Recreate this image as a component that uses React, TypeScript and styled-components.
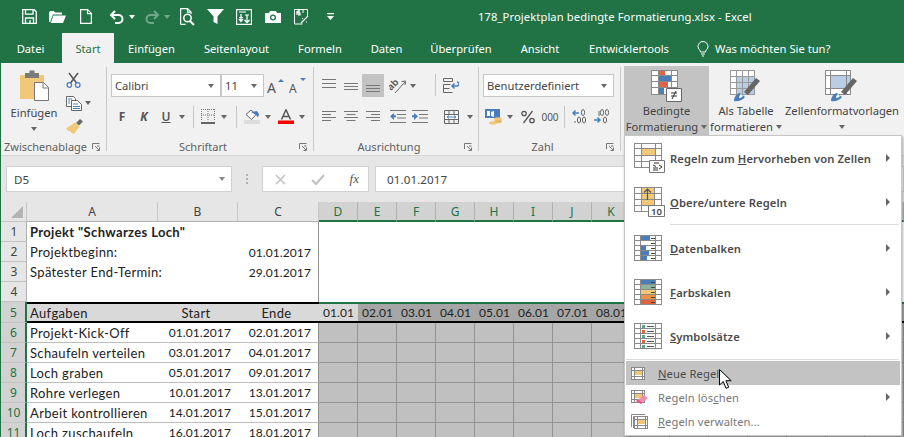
import React from "react";
import styled, { createGlobalStyle } from "styled-components";

const Global = createGlobalStyle`
  html, body { margin: 0; padding: 0; background: #e6e6e6; }
  * { box-sizing: border-box; }
  svg { display: block; flex: none; }
`;
const UI = `"Noto Sans", "Open Sans", sans-serif`;
const GREEN = "#217346";

const Page = styled.div`
  position: relative; width: 904px; height: 437px; overflow: hidden;
  display: flex; flex-direction: column; background: #e6e6e6;
  font-family: ${UI}; font-size: 11.2px; color: #444;
  border-left: 1px solid ${GREEN};
`;
const TitleBar = styled.div`
  height: 33px; flex: none; background: ${GREEN}; display: flex; align-items: center;
  padding-left: 15px; color: #fff; margin-left: -1px;
`;
const QatBtn = styled.div<{ $w: number; $ml?: number }>`
  width: ${p => p.$w}px; margin-left: ${p => p.$ml ?? 0}px; height: 24px; display: flex; align-items: center; justify-content: center;
`;
const DocTitle = styled.div`
  margin-left: 142px; font-size: 11.2px; white-space: nowrap; letter-spacing: .1px;
`;
const TabBar = styled.div`
  height: 30px; flex: none; background: ${GREEN}; display: flex; align-items: stretch; margin-left: -1px; padding-left: 4px;
`;
const Tab = styled.div<{ $w: number; $active?: boolean }>`
  width: ${p => p.$w}px; display: flex; align-items: center; justify-content: center; white-space: nowrap;
  color: ${p => (p.$active ? GREEN : "#fff")}; background: ${p => (p.$active ? "#f1f1f1" : "transparent")};
  font-size: 11.2px; padding-top: 1px;
  &:first-child { padding-right: 5px; }
`;
const TellMe = styled.div`
  display: flex; align-items: center; gap: 6px; margin-left: 14px; color: #fff; white-space: nowrap; padding-top: 1px;
`;
const Ribbon = styled.div`
  height: 93px; flex: none; background: #f1f1f1; border-bottom: 1px solid #d4d4d4; display: flex; padding-left: 1px;
`;
const Group = styled.div<{ $w: number }>`
  width: ${p => p.$w}px; flex: none; display: flex; flex-direction: column; height: 92px;
`;
const GroupBody = styled.div<{ $pl?: number; $pt?: number }>`
  height: 76px; display: flex; padding-left: ${p => p.$pl ?? 0}px; padding-top: ${p => p.$pt ?? 0}px;
`;
const GroupFoot = styled.div<{ $left?: boolean }>`
  height: 16px; display: flex; align-items: center; color: #606060; font-size: 11px; line-height: 16px;
  justify-content: space-between; padding: 0 6px 0 ${p => (p.$left ? 2 : 0)}px; white-space: nowrap;
  & > span:first-child { flex: 1; text-align: ${p => (p.$left ? "left" : "center")}; }
`;
const RibbonSep = styled.div`
  width: 1px; flex: none; margin: 4px 0 4px; background: #c9c9c9; height: 84px;
`;
const Stack = styled.div<{ $w?: number }>`
  display: flex; flex-direction: column; ${p => (p.$w ? `width: ${p.$w}px;` : "")}
`;
const Row = styled.div<{ $mt?: number }>`
  display: flex; align-items: center; height: 23px; margin-top: ${p => p.$mt ?? 0}px;
`;
const Tool = styled.div<{ $w?: number; $on?: boolean; $ml?: number }>`
  width: ${p => p.$w ?? 22}px; height: 23px; flex: none; display: flex; align-items: center; justify-content: center;
  margin-left: ${p => p.$ml ?? 0}px; background: ${p => (p.$on ? "#c3c3c3" : "transparent")}; color: #555; font-size: 10px;
`;
const Divider = styled.div<{ $l: number; $r: number }>`
  width: 1px; height: 22px; background: #c6c6c6; margin: 0 ${p => p.$r}px 0 ${p => p.$l}px;
`;
const Combo = styled.div<{ $w: number }>`
  width: ${p => p.$w}px; height: 23px; background: #fff; border: 1px solid #c6c6c6; display: flex; align-items: center;
  justify-content: space-between; padding: 0 6px 0 3px; font-size: 11.2px; color: #444; white-space: nowrap;
`;
const Caret = styled.i<{ $c?: string }>`
  display: block; width: 0; height: 0; flex: none; border-left: 3.5px solid transparent; border-right: 3.5px solid transparent;
  border-top: 4px solid ${p => p.$c ?? "#666"};
`;
const PasteCol = styled.div`
  width: 62px; display: flex; flex-direction: column; align-items: center; padding-top: 7px; color: #444; margin-right: 1px;
`;
const PasteLabel = styled.div`
  line-height: 16px; margin-top: 4px;
`;
const SmallCol = styled.div`
  display: flex; flex-direction: column; padding-top: 5px;
`;
const SmallTool = styled.div`
  height: 23.5px; display: flex; align-items: center; gap: 3px;
`;
const BigBtn = styled.div<{ $w: number; $on?: boolean }>`
  width: ${p => p.$w}px; height: 69px; flex: none; display: flex; flex-direction: column; align-items: center; padding-top: 4px;
  background: ${p => (p.$on ? "#c3c3c3" : "transparent")}; color: #444; line-height: 16px; white-space: nowrap; font-size: 11.2px;
`;
const BigIcon = styled.div`
  height: 33px; display: flex; align-items: flex-start; justify-content: center;
`;
const BigLine = styled.div`
  display: flex; align-items: center; gap: 3px; height: 16px;
`;
const FormulaBar = styled.div`
  height: 46px; flex: none; display: flex; align-items: flex-start; padding: 10px 0 0 5px; background: #e6e6e6;
`;
const NameBox = styled.div`
  width: 226px; height: 26px; background: #fff; border: 1px solid #d0d0d0; display: flex; align-items: center;
  justify-content: space-between; padding: 0 6px 0 7px; color: #444; font-size: 11.6px;
`;
const Dots = styled.div`
  width: 2px; height: 10px; margin: 8px 14px 0 14px; background: repeating-linear-gradient(#b0b0b0 0 2px, transparent 2px 4px);
`;
const FxBox = styled.div`
  width: 107px; height: 26px; background: #fff; border: 1px solid #d0d0d0; display: flex; align-items: center; justify-content: space-between; padding: 0 9px 0 12px;
`;
const FxText = styled.i`
  font-family: "Liberation Serif", serif; font-size: 13px; color: #555; font-style: italic; font-weight: 400;
`;
const Entry = styled.div`
  flex: 1; height: 26px; margin-left: 6px; background: #fff; border: 1px solid #d0d0d0; display: flex; align-items: center; padding-left: 11px; color: #444; letter-spacing: .1px; font-size: 11.6px;
`;
const Sheet = styled.div`
  flex: none; display: grid; background: #fff;
  grid-template-columns: 26px 131px 80px 81px repeat(15, 39px);
  grid-template-rows: 20px repeat(4, 20px) 21px repeat(6, 20px);
  font-family: Lato, "Liberation Sans", sans-serif; font-size: 13px; color: #222; letter-spacing: .35px;
`;
const Corner = styled.div`
  background: #e6e6e6; border-right: 1px solid #c6c6c6; border-bottom: 1px solid #c6c6c6; display: flex; align-items: flex-end; justify-content: flex-end; padding: 0 3px 3px 0;
`;
const ColHead = styled.div<{ $on?: boolean }>`
  display: flex; align-items: center; justify-content: center; font-family: ${UI}; font-size: 12px; letter-spacing: 0;
  background: ${p => (p.$on ? "#d2d2d2" : "#e6e6e6")}; color: ${p => (p.$on ? GREEN : "#444")};
  border-right: 1px solid ${p => (p.$on ? "#b0b0b0" : "#c6c6c6")};
  border-bottom: ${p => (p.$on ? `2px solid ${GREEN}` : "1px solid #b0b0b0")}; padding-top: ${p => (p.$on ? 1 : 0)}px;
`;
const RowHead = styled.div<{ $on?: boolean }>`
  display: flex; align-items: center; justify-content: center; font-family: ${UI}; font-size: 12px; padding-left: 1px; letter-spacing: 0;
  background: ${p => (p.$on ? "#d2d2d2" : "#e6e6e6")}; color: ${p => (p.$on ? GREEN : "#444")};
  border-bottom: 1px solid #c2c2c2; border-right: ${p => (p.$on ? `2px solid ${GREEN}` : "1px solid #b0b0b0")};
`;
const Cell = styled.div<{ $align?: string; $bold?: boolean; $kind?: string; $last?: boolean }>`
  display: flex; align-items: center; white-space: nowrap; padding: 0 7px 0 3px;
  justify-content: ${p => p.$align ?? "flex-start"}; font-weight: ${p => (p.$bold ? 700 : 400)};
  background: ${p => (p.$kind === "head" ? "#d9d9d9" : "transparent")};
  border-bottom: ${p => (p.$kind === "head" ? "2px solid #000" : p.$kind === "body" ? "1px solid #bdbdbd" : "none")};
  border-top: ${p => (p.$kind === "head" ? "2px solid #000" : "none")};
  border-right: ${p => (p.$last ? "1px solid #8f8f8f" : "none")};
`;
const Num = styled.span`
  font-size: 12px; letter-spacing: .1px;
`;
const Blank = styled.div`
  grid-column: 5 / -1; grid-row: 2 / 6; background: #fff;
`;
const DateHead = styled.div<{ $today?: boolean }>`
  display: flex; align-items: center; justify-content: center; overflow: hidden; white-space: nowrap;
  background: ${p => (p.$today ? "#d9d9d9" : "#a6a6a6")}; border-top: 2px solid ${GREEN}; border-bottom: 2px solid #000;
`;
const GanttCell = styled.div`
  background: #c0c0c0; border-right: 1px solid #929292; border-bottom: 1px solid #929292;
`;
const Menu = styled.div`
  position: absolute; left: 623px; top: 135px; width: 278px; height: 301px; background: #fff;
  border: 1px solid #c6c6c6; box-shadow: 1px 2px 3px rgba(0,0,0,.3); padding: 0 1px; display: flex; flex-direction: column;
`;
const BigItem = styled.div`
  height: 44px; flex: none; display: flex; align-items: center; padding: 0 10px 0 8px;
  font-weight: 600; color: #4a4a4a; font-size: 11.2px; letter-spacing: .1px;
`;
const BigItemIcon = styled.div`
  width: 36px; flex: none;
`;
const MenuText = styled.div`
  flex: 1; white-space: nowrap;
`;
const SmallItem = styled.div<{ $on?: boolean; $off?: boolean }>`
  height: 24px; flex: none; display: flex; align-items: center; padding: 0 10px 0 5px; letter-spacing: .1px;
  background: ${p => (p.$on ? "#c3c3c3" : "transparent")}; color: ${p => (p.$off ? "#777" : "#4a4a4a")};
`;
const SmallItemIcon = styled.div`
  width: 27px; flex: none;
`;
const MenuSep = styled.div<{ $ml?: number; $mt?: number; $mb?: number }>`
  height: 1px; flex: none; background: #dcdcdc; margin: ${p => p.$mt ?? 0}px 1px ${p => p.$mb ?? 0}px ${p => p.$ml ?? 0}px;
`;
const Arrow = styled.i`
  display: block; width: 0; height: 0; flex: none; border-top: 4px solid transparent; border-bottom: 4px solid transparent; border-left: 4px solid #666;
`;
const Cursor = styled.div`
  position: absolute; left: 718px; top: 369px;
`;

const W = "#fff";
const BL = "#4a7ebb";
const OR = "#e2643f";
const YE = "#f0c878";

const Launcher = () => (
  <svg width="8" height="8" viewBox="0 0 8 8" fill="none" stroke="#777"><path d="M.5 6V.5H7.500M5 3h2.500M3 3l4 4M7.500 4.500V7.500H4.500"/></svg>
);
const Save = () => (<svg width="15" height="15" viewBox="0 0 15 15" fill="none" stroke={W} strokeWidth="1.300"><path d="M.7.700h11.500l2.100 2.100v11.500H.7z"/><path d="M3.500 1v4.200h7.500V1M3.500 14V9h8v5M8 11v3" /></svg>);
const Open = () => (<svg width="17" height="14" viewBox="0 0 17 14" fill={W}><path d="M0 2.500 1 1h4l1 1.500h7v2H4L1.200 12H0z"/><path d="M4.500 5.500H17L14 13H1.700z"/></svg>);
const NewDoc = () => (<svg width="12" height="15" viewBox="0 0 12 15" fill="none" stroke={W} strokeWidth="1.200"><path d="M.6.600h7l3.800 3.800v10H.6zM7.500.6v4h4"/></svg>);
const Undo = ({ c = W }: { c?: string }) => (<svg width="15" height="14" viewBox="0 0 15 14" fill="none" stroke={c} strokeWidth="2"><path d="M6 1 2 5l4 4M2 5h7.500a4 4 0 0 1 0 8H6"/></svg>);
const Preview = () => (<svg width="15" height="18" viewBox="0 0 15 18" fill="none" stroke={W} strokeWidth="1.200"><path d="M.6 16.400V.6h7l3.400 3.400v2M7.500.6v3.500h3.500M.6 16.400h5"/><circle cx="7.500" cy="10" r="3.700" strokeWidth="1.500"/><path d="m10 13 4 4" strokeWidth="2"/></svg>);
const Filter = () => (<svg width="17" height="15" viewBox="0 0 17 15" fill={W}><path d="M0 0h17l-6.500 7.500V15l-4-2V7.500z"/></svg>);
const SortBox = () => (<svg width="16" height="16" viewBox="0 0 16 16" fill="none" stroke={W} strokeWidth="1.100"><path d="M.6.600h14.800v14.800H.6zM3 3h7M9 6h4M3 8.500h4"/><path d="M11 6v7M8.500 11l2.500 2.500 2.500-2.500M5 5v7M3 10l2 2.500L7 10" strokeWidth="1.300"/></svg>);
const Camera = () => (<svg width="16" height="12" viewBox="0 0 16 12"><path fill={W} d="M0 2h4l1-2h6l1 2h4v10H0z"/><circle cx="8" cy="6.500" r="3" fill={GREEN}/><circle cx="8" cy="6.500" r="1.700" fill={W}/></svg>);
const Percent15 = () => (<svg width="16" height="16" viewBox="0 0 16 16" fill="none" stroke={W}><path d="M1.500 9V.5h13v7M1.500 9v6h8M6 .5V6M10 .5V4" strokeWidth="1"/><path d="M4 6V2M7 2H5v2h2v2H5M8 14l7-7M9 9.500h1M13 13h1" strokeWidth="1.200"/></svg>);
const Customize = () => (<svg width="7" height="7" viewBox="0 0 7 7" fill={W}><path d="M0 0h7v1.200H0zM0 3h7L3.500 7z"/></svg>);
const Bulb = () => (<svg width="12" height="16" viewBox="0 0 12 16" fill="none" stroke={W}><path d="M3.500 11c0-2-2.500-3-2.500-5.500a5 5 0 0 1 10 0c0 2.500-2.500 3.500-2.500 5.500zM4 13h4M5 15h2"/></svg>);

const Paste = () => (
  <svg width="29" height="31" viewBox="0 0 29 31">
    <path fill={YE} d="M0 5h24v24H0z" />
    <path fill="#7a7a7a" d="M5 3h4.500V.5h5V3H19v5H5z" />
    <path fill="#fff" stroke="#777" d="M14.500 12.500h9l5 5v13h-14z" />
    <path fill="none" stroke="#777" d="M23 12.500v5.500h5.500" />
  </svg>
);
const Cut = () => (<svg width="15" height="16" viewBox="0 0 15 16" fill="none"><path stroke="#555" strokeWidth="1.500" d="M3 1l7.500 10M12 1 4.500 11"/><circle cx="3.300" cy="13" r="2.300" stroke={BL} strokeWidth="1.300"/><circle cx="11.700" cy="13" r="2.300" stroke={BL} strokeWidth="1.300"/></svg>);
const Copy = () => (<svg width="16" height="15" viewBox="0 0 16 15" fill="#fff" stroke="#666"><path d="M.5.500h7l2 2v8h-9z"/><path d="M5.500 4.500h6l4 4v6h-10z"/><path d="M7 8h5M7 10.500h7M7 12.500h7M2 3h4M2 5h2M2 7h2" stroke={BL}/></svg>);
const Brush = () => (<svg width="17" height="15" viewBox="0 0 17 15"><path fill="#6a6a6a" d="M10 4 14 0l3 2.500-4 4z"/><path fill={YE} d="M0 9.500 9 3.500l4.500 4L8 15l-3-1.500-.5-1.500-2 .3z"/></svg>);
const GrowText = styled.text`
  font-family: ${UI}; fill: #555;
`;
const Grow = ({ up }: { up: boolean }) => (
  <svg width="18" height="18" viewBox="0 0 18 18"><GrowText x="0" y="16" fontSize={up ? 14 : 12}>A</GrowText><path fill={BL} d={up ? "M11 5 14 2l3 3z" : "M11 1h6l-3 3z"}/></svg>
);
const BoldF = styled.span`font-weight: 700; font-size: 12px; color: #555;`;
const ItalK = styled.span`font-weight: 700; font-style: italic; font-size: 12px; color: #555;`;
const UnderU = styled.span`font-weight: 600; font-size: 12px; color: #555; text-decoration: underline;`;
const Borders = () => (<svg width="14" height="15" viewBox="0 0 14 15" fill="none"><path stroke="#777" strokeDasharray="1 1" d="M.5 0v12M7 0v12M13.500 0v12M0 .5h14M0 6h14"/><path fill="#666" d="M0 13h14v2H0z"/></svg>);
const FillIcon = () => (<svg width="16" height="15" viewBox="0 0 16 15"><path fill="#ddd" d="M0 11h16v4H0z"/><path fill="#fff" stroke="#666" d="M2 5.500 7 1l5 4.500-4.500 5z"/><path fill={BL} d="M7 3l6-1 2 3c0 2-1 3-1.500 3L12 6z"/></svg>);
const FontColor = () => (<svg width="16" height="15" viewBox="0 0 16 15"><path fill="none" stroke="#555" strokeWidth="1.500" d="M3.500 10.500 8 0.800l4.500 9.700M5 7.500h6"/><path fill="#f00" d="M0 11.500h16V15H0z"/></svg>);
const Lines = ({ y, w = [14, 14, 14], x = [0, 0, 0] }: { y: number[]; w?: number[]; x?: number[] }) => (
  <svg width="15" height="15" viewBox="0 0 15 15" fill="none" stroke="#777">
    {y.map((v, i) => <path key={i} d={`M${x[i]} ${v + 0.5}h${w[i]}`} />)}
  </svg>
);
const OrientText = styled.text`
  font-family: ${UI}; font-size: 9.5px; font-weight: 600; fill: #555;
`;
const Orient = () => (
  <svg width="18" height="16" viewBox="0 0 18 16" fill="none">
    <OrientText transform="translate(2 13) rotate(-45)">ab</OrientText>
    <path stroke="#666" d="M6 15 16 4M12.500 3.500 16.500 3l-.5 4" />
  </svg>
);
const Wrap = () => (<svg width="16" height="15" viewBox="0 0 16 15" fill="none" stroke="#666"><path d="M.5.500h9v3h-9zM.5 6.500h7M.5 6.500v8h9M.5 10.500h6"/><path stroke={BL} strokeWidth="1.500" d="M9 8h5a1 1 0 0 0 0-4M11.500 5.500 9 8l2.500 2.500"/></svg>);
const Merge = () => (<svg width="15" height="14" viewBox="0 0 15 14" fill="none" stroke="#666"><path d="M.5.500h14v13H.5zM.5 4.500h14M.5 9.500h14M5 .5v4M10 .5v4M5 9.500v4M10 9.500v4"/><path fill="#fff" stroke="none" d="M1 5h13v4H1z"/><path stroke={BL} d="M3 7h9M3 7l2-1.500M3 7l2 1.500M12 7l-2-1.500M12 7l-2 1.500"/></svg>);
const Indent = ({ out }: { out: boolean }) => (
  <svg width="16" height="13" viewBox="0 0 16 13" fill="none">
    <path stroke="#777" d="M0 .5h16M7 4.500h9M7 8h9M0 12.500h16" />
    <path fill={BL} d={out ? "M0 6.300 4 3v2.300h2v2H4V10z" : "M6 6.300 2 3v2.300H0v2h2V10z"} />
  </svg>
);
const Currency = () => (<svg width="18" height="16" viewBox="0 0 18 16"><path fill={BL} d="M0 0h15v9H0z"/><path fill="#fff" d="M2 2h3v5H2zM6 3l3-1v6L6 7z"/><ellipse cx="13" cy="10" rx="4" ry="1.700" fill={YE}/><ellipse cx="13" cy="12.500" rx="4" ry="1.700" fill="#e7b85e"/><ellipse cx="8" cy="14" rx="4" ry="1.700" fill={YE}/></svg>);
const Decimal = ({ inc }: { inc: boolean }) => (
  <svg width="16" height="15" viewBox="0 0 16 15" fill="none">
    <path stroke={BL} strokeWidth="1.500" d={inc ? "M1 4h6M3.500 1.500 1 4l2.500 2.500" : "M0 11h6M3.500 8.500 6 11l-2.500 2.500"} />
    <g stroke="#666">{inc
      ? <><ellipse cx="11" cy="3.500" rx="1.600" ry="3"/><ellipse cx="7" cy="11" rx="1.600" ry="3"/><ellipse cx="12" cy="11" rx="1.600" ry="3"/><path d="M3 12v2"/></>
      : <><ellipse cx="8" cy="3.500" rx="1.600" ry="3"/><ellipse cx="13" cy="3.500" rx="1.600" ry="3"/><ellipse cx="11" cy="11" rx="1.600" ry="3"/><path d="M5 2v5"/></>}</g>
  </svg>
);

const GridBase = ({ w, h, cols, rows, stroke = "#8a8a8a" }: { w: number; h: number; cols: number[]; rows: number[]; stroke?: string }) => (
  <g fill="none" stroke={stroke}>
    <rect x=".5" y=".5" width={w - 1} height={h - 1} />
    {cols.map(c => <path key={c} d={`M${c + .5} 0v${h}`} />)}
    {rows.map(r => <path key={r} d={`M0 ${r + .5}h${w}`} />)}
  </g>
);
const CondIcon = () => (
  <svg width="31" height="32" viewBox="0 0 31 32">
    <rect x="0" y="0" width="27" height="25" fill="#fff" />
    <path fill={OR} d="M8 0h6v5H8z" /><path fill={BL} d="M8 6h12v5H8z" /><path fill={OR} d="M8 12h9v5H8z" /><path fill={BL} d="M8 18h5v6H8z" />
    <GridBase w={27} h={25} cols={[7, 20]} rows={[5, 11, 17]} />
    <path fill="#fff" stroke="#666" d="M15.500 18.500h15v13h-15z" />
    <path stroke="#333" fill="none" d="M20 23h6M20 26h6M25 21l-4 8" />
  </svg>
);
const BrushOver = () => (<g><path fill={BL} d="M4 31c0-4 3-8 6-8l5 4c-2 3-7 5-11 4z"/><path fill="#fff" d="M9 28c2 0 3-1 4-2l-2-2c-1 1-2 2-2 4z"/><path fill="#666" d="M14 22 26 8l4 3-12 14z"/></g>);
const TableIcon = () => (
  <svg width="32" height="32" viewBox="0 0 32 32">
    <path fill="#fff" d="M0 0h25v25H0z"/>
    <path fill="#b9cde5" d="M7 7h18v18H7z"/>
    <GridBase w={25} h={25} cols={[6, 12, 18]} rows={[6, 12, 18]} stroke="#999" />
    <BrushOver />
  </svg>
);
const StyleIcon = () => (
  <svg width="34" height="32" viewBox="0 0 34 32">
    <path fill="#fff" d="M0 0h25v25H0z"/>
    <path fill="#b9cde5" d="M6 5h19v13H6z"/>
    <GridBase w={26} h={25} cols={[5, 21]} rows={[5, 18]} stroke="#888" />
    <g transform="translate(2 0)"><BrushOver /></g>
  </svg>
);
const Highlight = () => (
  <svg width="31" height="30" viewBox="0 0 31 30">
    <path fill={YE} d="M7 5h14v7H7z"/>
    <GridBase w={28} h={25} cols={[7, 21]} rows={[5, 12, 18]} />
    <path fill="#fff" stroke="#777" d="M15.500 17.500h15v12h-15z"/>
    <path fill="none" stroke="#333" d="M20 20h5M19 22l3 1.500M19 25h5M19 27h5M25 22l3 2-3 2"/>
  </svg>
);
const TopText = styled.text`
  font-family: ${UI}; fill: #444; font-size: 9.5px;
`;
const TopTen = () => (
  <svg width="31" height="30" viewBox="0 0 31 30">
    <path fill={YE} d="M7 0h13v18H7z"/>
    <GridBase w={28} h={25} cols={[7, 20]} rows={[6, 12, 18]} />
    <path stroke="#555" strokeWidth="1.200" fill="none" d="M13.500 13V2M10 5.500 13.500 2 17 5.500"/>
    <path fill="#fff" stroke="#777" d="M14.500 18.500h16v11h-16z"/>
    <TopText x="17" y="28">10</TopText>
  </svg>
);
const RowBars = ({ fills }: { fills: { c: string; w: number }[] }) => (
  <svg width="28" height="26" viewBox="0 0 28 26">
    {fills.map((f, i) => <path key={i} fill={f.c} d={`M7 ${i * 5 + 1}h${f.w}v4H7z`} />)}
    {fills.map((_, i) => <path key={i} stroke="#444" d={`M17 ${i * 5 + 3.500}h4`} />)}
    <GridBase w={28} h={26} cols={[6, 21]} rows={[5, 10, 15, 20]} />
  </svg>
);
const IconSet = () => (
  <svg width="28" height="26" viewBox="0 0 28 26">
    {[0, 1, 2, 3, 4].map(i => <React.Fragment key={i}><path fill={i % 2 ? OR : "#5fa58a"} d={`M8 ${i * 5 + 2}h3v3H8z`} /><path stroke="#555" d={`M13 ${i * 5 + 3.500}h7`} /></React.Fragment>)}
    <GridBase w={28} h={26} cols={[6, 21]} rows={[5, 10, 15, 20]} />
  </svg>
);
const MiniGridG = () => (<g><path fill={YE} d="M4 3h7v5H4z"/><GridBase w={14} h={13} cols={[3, 11]} rows={[3, 9]} stroke="#888" /></g>);
const MiniGrid = () => (
  <svg width="14" height="13" viewBox="0 0 14 13"><path fill="#fff" d="M0 0h14v13H0z"/><MiniGridG /></svg>
);
const Eraser = () => (
  <svg width="18" height="15" viewBox="0 0 18 15">
    <MiniGridG />
    <path fill="#f08cb0" d="M5 11 13 5l4 3-7 6z"/><path fill="#d14" opacity=".5" d="M5 11l2-1.500 4 3L10 14z"/>
  </svg>
);
const Manage = () => (
  <svg width="17" height="15" viewBox="0 0 17 15" fill="none">
    <path stroke="#888" d="M.5 13V.5H14M2.500 14V2.500H16"/>
    <g transform="translate(3 2)"><MiniGridG /></g>
  </svg>
);
const Pointer = () => (
  <svg width="14" height="21" viewBox="0 0 14 21"><path fill="#fff" stroke="#000" d="M.5.500v15.500l3.800-3.500 2.700 6.800 2.700-1.100-2.800-6.500h5.300z"/></svg>
);
const XMark = () => (<svg width="11" height="11" viewBox="0 0 11 11" stroke="#c2c2c2" strokeWidth="1.600"><path d="m1 1 9 9M10 1l-9 9"/></svg>);
const Check = () => (<svg width="14" height="11" viewBox="0 0 14 11" fill="none" stroke="#c2c2c2" strokeWidth="2.200"><path d="m1 6 4 4 8-9"/></svg>);
const CornerMark = () => (<svg width="12" height="12" viewBox="0 0 12 12"><path fill="#b4b4b4" d="M12 0v12H0z"/></svg>);

const tabs: [string, number][] = [["Datei", 58], ["Start", 52], ["Einfügen", 75], ["Seitenlayout", 95], ["Formeln", 72], ["Daten", 61], ["Überprüfen", 88], ["Ansicht", 70], ["Entwicklertools", 108]];
const tasks: [string, string, string][] = [
  ["Projekt-Kick-Off", "01.01.2017", "02.01.2017"],
  ["Schaufeln verteilen", "03.01.2017", "04.01.2017"],
  ["Loch graben", "05.01.2017", "09.01.2017"],
  ["Rohre verlegen", "10.01.2017", "13.01.2017"],
  ["Arbeit kontrollieren", "14.01.2017", "15.01.2017"],
  ["Loch zuschaufeln", "16.01.2017", "18.01.2017"],
];
const cols = ["D", "E", "F", "G", "H", "I", "J", "K", "L", "M", "N", "O", "P", "Q", "R"];
const lBars = [{ c: BL, w: 9 }, { c: "#fff", w: 3 }, { c: BL, w: 5 }, { c: BL, w: 8 }, { c: BL, w: 6 }];
const scale = [{ c: BL, w: 14 }, { c: "#8db39c", w: 14 }, { c: YE, w: 14 }, { c: "#ed9245", w: 14 }, { c: OR, w: 14 }];

export default function App() {
  return (
    <Page>
      <Global />
      <TitleBar>
        <QatBtn $w={28}><Save /></QatBtn>
        <QatBtn $w={29}><Open /></QatBtn>
        <QatBtn $w={28}><NewDoc /></QatBtn>
        <QatBtn $w={22} $ml={5}><Undo /></QatBtn>
        <QatBtn $w={9}><Caret $c="#fff" /></QatBtn>
        <QatBtn $w={22} $ml={5}><svg width="15" height="14" viewBox="0 0 15 14" fill="none" stroke="#6fa88a" strokeWidth="2"><path d="M9 1l4 4-4 4M13 5H5.500a4 4 0 0 0 0 8H9"/></svg></QatBtn>
        <QatBtn $w={7}><Caret $c="#6fa88a" /></QatBtn>
        <QatBtn $w={28} $ml={3}><Preview /></QatBtn>
        <QatBtn $w={29}><Filter /></QatBtn>
        <QatBtn $w={28}><SortBox /></QatBtn>
        <QatBtn $w={29}><Camera /></QatBtn>
        <QatBtn $w={28}><Percent15 /></QatBtn>
        <QatBtn $w={12} $ml={9}><Customize /></QatBtn>
        <DocTitle>178_Projektplan bedingte Formatierung.xlsx - Excel</DocTitle>
      </TitleBar>
      <TabBar>
        {tabs.map(([t, w]) => <Tab key={t} $w={w} $active={t === "Start"}>{t}</Tab>)}
        <TellMe><Bulb />Was möchten Sie tun?</TellMe>
      </TabBar>
      <Ribbon>
        <Group $w={104}>
          <GroupBody $pl={1}>
            <PasteCol>
              <Paste />
              <PasteLabel>Einfügen</PasteLabel>
              <BigLine><Caret /></BigLine>
            </PasteCol>
            <SmallCol>
              <SmallTool><Cut /></SmallTool>
              <SmallTool><Copy /><Caret /></SmallTool>
              <SmallTool><Brush /></SmallTool>
            </SmallCol>
          </GroupBody>
          <GroupFoot $left><span>Zwischenablage</span><Launcher /></GroupFoot>
        </Group>
        <RibbonSep />
        <Group $w={206}>
          <GroupBody $pl={4} $pt={11}>
            <Stack>
              <Row>
                <Combo $w={110}>Calibri<Caret /></Combo>
                <Combo $w={43}>11<Caret /></Combo>
                <Tool $ml={1}><Grow up /></Tool>
                <Tool><Grow up={false} /></Tool>
              </Row>
              <Row $mt={8}>
                <Tool><BoldF>F</BoldF></Tool>
                <Tool><ItalK>K</ItalK></Tool>
                <Tool><UnderU>U</UnderU></Tool>
                <Tool $w={10}><Caret /></Tool>
                <Divider $l={6} $r={3} />
                <Tool><Borders /></Tool>
                <Tool $w={10}><Caret /></Tool>
                <Divider $l={7} $r={4} />
                <Tool><FillIcon /></Tool>
                <Tool $w={10}><Caret /></Tool>
                <Tool $ml={2}><FontColor /></Tool>
                <Tool $w={10}><Caret /></Tool>
              </Row>
            </Stack>
          </GroupBody>
          <GroupFoot><span>Schriftart</span><Launcher /></GroupFoot>
        </Group>
        <RibbonSep />
        <Group $w={164}>
          <GroupBody $pl={4} $pt={11}>
            <Stack $w={116}>
              <Row>
                <Tool><Lines y={[1, 5, 9]} /></Tool>
                <Tool><Lines y={[5, 8, 11]} /></Tool>
                <Tool $on><Lines y={[7, 10, 13]} /></Tool>
                <Tool $ml={3}><Orient /></Tool>
                <Tool $w={8}><Caret /></Tool>
              </Row>
              <Row $mt={8}>
                <Tool><Lines y={[2, 5, 8, 11]} w={[14, 9, 14, 9]} x={[0, 0, 0, 0]} /></Tool>
                <Tool><Lines y={[2, 5, 8, 11]} w={[14, 9, 14, 9]} x={[0, 2.5, 0, 2.5]} /></Tool>
                <Tool><Lines y={[2, 5, 8, 11]} w={[14, 9, 14, 9]} x={[0, 5, 0, 5]} /></Tool>
                <Tool $ml={3}><Indent out /></Tool>
                <Tool><Indent out={false} /></Tool>
              </Row>
            </Stack>
            <Divider $l={1} $r={4} />
            <Stack>
              <Row><Tool><Wrap /></Tool></Row>
              <Row $mt={8}>
                <Tool><Merge /></Tool>
                <Tool $w={12} $ml={2}><Caret /></Tool>
              </Row>
            </Stack>
          </GroupBody>
          <GroupFoot><span>Ausrichtung</span><Launcher /></GroupFoot>
        </Group>
        <RibbonSep />
        <Group $w={141}>
          <GroupBody $pl={4} $pt={11}>
            <Stack>
              <Row><Combo $w={131}>Benutzerdefiniert<Caret /></Combo></Row>
              <Row $mt={8}>
                <Tool><Currency /></Tool>
                <Tool $w={10}><Caret /></Tool>
                <Tool $ml={2}><svg width="14" height="14" viewBox="0 0 14 14" fill="none" stroke="#555" strokeWidth="1.300"><circle cx="3" cy="3.500" r="2.200"/><circle cx="11" cy="10.500" r="2.200"/><path d="M11.500 1 2.500 13"/></svg></Tool>
                <Tool>000</Tool>
                <Divider $l={3} $r={4} />
                <Tool><Decimal inc /></Tool>
                <Tool><Decimal inc={false} /></Tool>
              </Row>
            </Stack>
          </GroupBody>
          <GroupFoot><span>Zahl</span><Launcher /></GroupFoot>
        </Group>
        <RibbonSep />
        <Group $w={280}>
          <GroupBody $pl={3} $pt={3}>
            <BigBtn $w={85} $on>
              <BigIcon><CondIcon /></BigIcon>
              <div>Bedingte</div>
              <BigLine>Formatierung<Caret /></BigLine>
            </BigBtn>
            <BigBtn $w={74}>
              <BigIcon><TableIcon /></BigIcon>
              <div>Als Tabelle</div>
              <BigLine>formatieren<Caret /></BigLine>
            </BigBtn>
            <BigBtn $w={118}>
              <BigIcon><StyleIcon /></BigIcon>
              <div>Zellenformatvorlagen</div>
              <BigLine><Caret /></BigLine>
            </BigBtn>
          </GroupBody>
        </Group>
      </Ribbon>
      <FormulaBar>
        <NameBox>D5<Caret $c="#888" /></NameBox>
        <Dots />
        <FxBox><XMark /><Check /><FxText>fx</FxText></FxBox>
        <Entry>01.01.2017</Entry>
      </FormulaBar>
      <Sheet>
        <Corner><CornerMark /></Corner>
        <ColHead>A</ColHead><ColHead>B</ColHead><ColHead>C</ColHead>
        {cols.map(c => <ColHead key={c} $on>{c}</ColHead>)}

        <RowHead>1</RowHead><Cell $bold $last style={{ gridColumn: "2 / 5" }}>Projekt "Schwarzes Loch"</Cell>
        <Blank />
        <RowHead>2</RowHead><Cell>Projektbeginn:</Cell><Cell /><Cell $align="flex-end" $last><Num>01.01.2017</Num></Cell>
        <RowHead>3</RowHead><Cell>Spätester End-Termin:</Cell><Cell /><Cell $align="flex-end" $last><Num>29.01.2017</Num></Cell>
        <RowHead>4</RowHead><Cell /><Cell /><Cell $last />

        <RowHead $on>5</RowHead>
        <Cell $kind="head">Aufgaben</Cell>
        <Cell $kind="head" $align="center">Start</Cell>
        <Cell $kind="head" $align="center">Ende</Cell>
        {cols.map((c, i) => <DateHead key={c} $today={i === 0}><Num>{`${String(i + 1).padStart(2, "0")}.01`}</Num></DateHead>)}

        {tasks.map(([t, s, e], r) => (
          <React.Fragment key={t}>
            <RowHead $on>{r + 6}</RowHead>
            <Cell $kind="body">{t}</Cell>
            <Cell $kind="body" $align="flex-end"><Num>{s}</Num></Cell>
            <Cell $kind="body" $align="flex-end" $last><Num>{e}</Num></Cell>
            {cols.map(c => <GanttCell key={c} />)}
          </React.Fragment>
        ))}
      </Sheet>

      <Menu>
        <BigItem><BigItemIcon><Highlight /></BigItemIcon><MenuText>Regeln zum <u>H</u>ervorheben von Zellen</MenuText><Arrow /></BigItem>
        <BigItem><BigItemIcon><TopTen /></BigItemIcon><MenuText><u>O</u>bere/untere Regeln</MenuText><Arrow /></BigItem>
        <MenuSep $ml={44} $mb={1} />
        <BigItem><BigItemIcon><RowBars fills={lBars} /></BigItemIcon><MenuText><u>D</u>atenbalken</MenuText><Arrow /></BigItem>
        <BigItem><BigItemIcon><RowBars fills={scale} /></BigItemIcon><MenuText><u>F</u>arbskalen</MenuText><Arrow /></BigItem>
        <BigItem><BigItemIcon><IconSet /></BigItemIcon><MenuText><u>S</u>ymbolsätze</MenuText><Arrow /></BigItem>
        <MenuSep $mt={1} $mb={1} />
        <SmallItem $on><SmallItemIcon><MiniGrid /></SmallItemIcon><MenuText><u>N</u>eue Regel...</MenuText></SmallItem>
        <SmallItem $off><SmallItemIcon><Eraser /></SmallItemIcon><MenuText>Regeln lös<u>c</u>hen</MenuText><Arrow /></SmallItem>
        <SmallItem $off><SmallItemIcon><Manage /></SmallItemIcon><MenuText><u>R</u>egeln verwalten...</MenuText></SmallItem>
      </Menu>
      <Cursor><Pointer /></Cursor>
    </Page>
  );
}
